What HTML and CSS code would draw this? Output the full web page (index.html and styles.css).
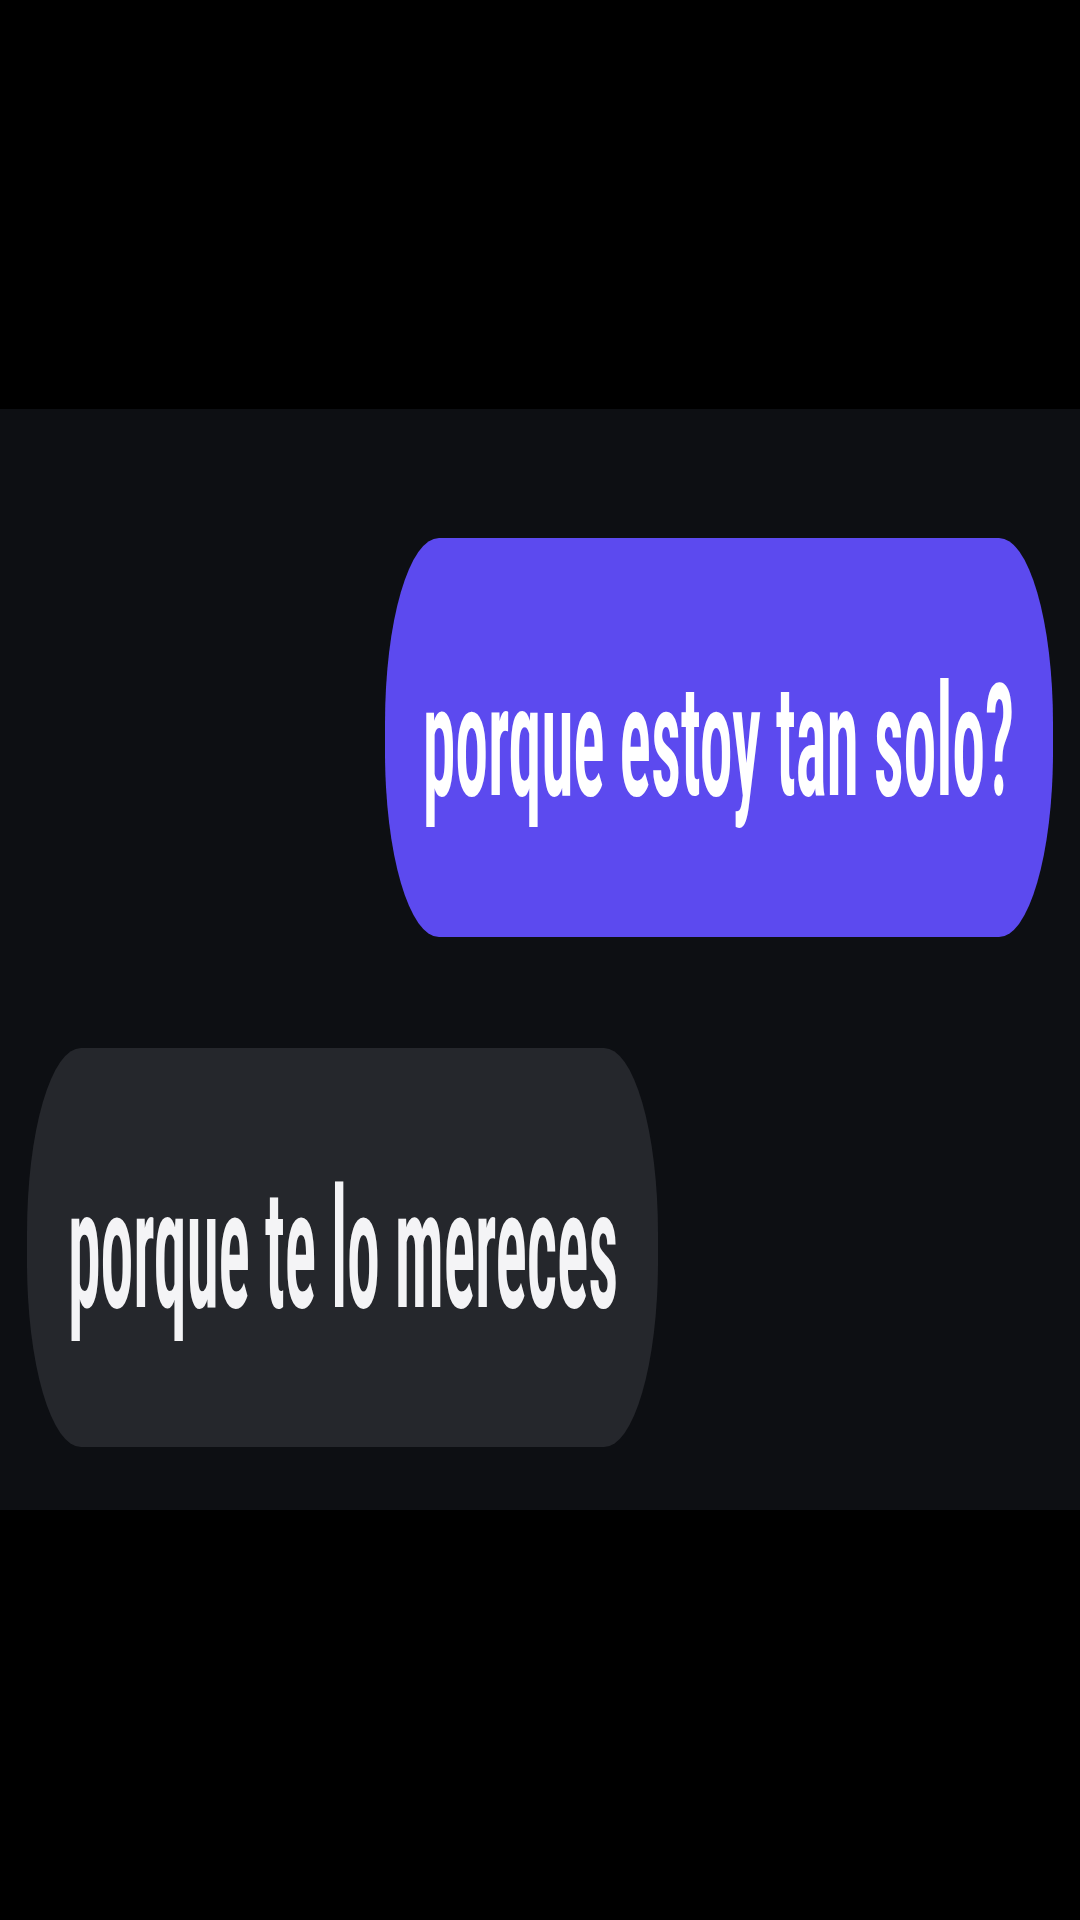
FILE: index.html
```html
<!DOCTYPE html>
<html lang="es">
<head>
<meta charset="utf-8">
<title>chat</title>
<link rel="stylesheet" href="styles.css">
</head>
<body>
<div class="screen">
  <div class="band"></div>
  <main class="chat">
    <div class="bubble sent"><span class="msg msg-sent">porque estoy tan solo?</span></div>
    <div class="bubble received"><span class="msg msg-received">porque te lo mereces</span></div>
  </main>
  <div class="band band-bottom"></div>
</div>
</body>
</html>
```
FILE: styles.css
```css
html, body {
  margin: 0;
  padding: 0;
  background: #000;
}
.screen {
  width: 1080px;
  height: 1920px;
  display: flex;
  flex-direction: column;
  background: #000;
}
.band {
  height: 409px;
  flex: none;
}
.band-bottom {
  flex: 1;
}
.chat {
  height: 1101px;
  flex: none;
  background: #0d0f13;
  display: flex;
  flex-direction: column;
  padding: 129px 27px 0;
  box-sizing: border-box;
  gap: 111px;
}
.bubble {
  height: 399px;
  box-sizing: border-box;
  display: flex;
  align-items: center;
  padding: 0 39px 0 38px;
  border-radius: 54px / 185px;
}
.sent {
  align-self: flex-end;
  background: #5c4aef;
}
.received {
  align-self: flex-start;
  background: #25272c;
  padding: 0 40px 0 41px;
}
.msg {
  display: inline-block;
  font-family: "Roboto Condensed", Roboto, sans-serif;
  font-stretch: condensed;
  font-weight: 600;
  font-size: 66px;
  line-height: 1;
  letter-spacing: -0.2px;
  color: #fff;
  white-space: nowrap;
  transform-origin: 50% 50%;
}
.msg-sent {
  transform: translateY(5px) scaleY(2.37);
}
.msg-received {
  color: #f4f4f6;
  transform: translateY(4px) scaleY(2.52);
}
```
